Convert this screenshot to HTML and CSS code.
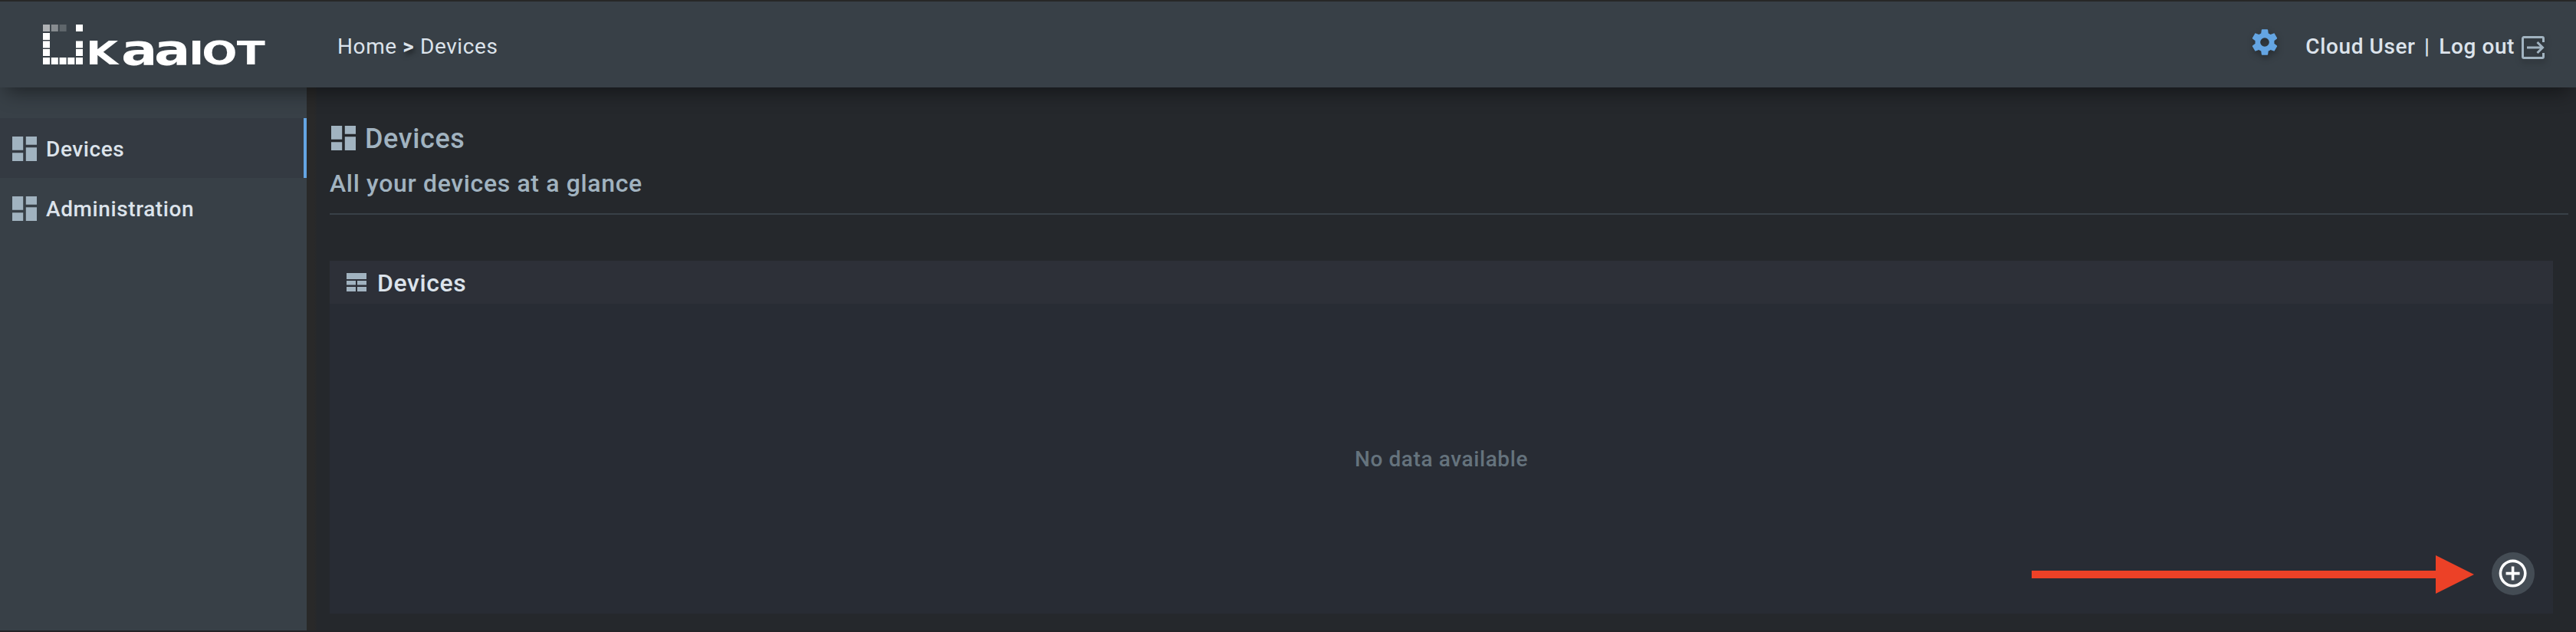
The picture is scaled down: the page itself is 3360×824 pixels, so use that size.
FILE: index.html
```html
<!DOCTYPE html>
<html lang="en">
<head>
<meta charset="utf-8">
<title>Devices</title>
<link rel="stylesheet" href="styles.css">
</head>
<body>
<svg class="defs" width="0" height="0" aria-hidden="true">
  <symbol id="dashboard" viewBox="3 3 18 18"><path d="M3 13h8V3H3zm0 8h8v-6H3zm10 0h8V11h-8zm0-18v6h8V3z"/></symbol>
</svg>
<header class="topbar">
  <a class="brand">
    <svg class="logo" width="400" height="112" viewBox="0 2 400 112" fill="#fff">
      <rect x="56" y="32" width="9" height="9" opacity=".6"/>
      <rect x="66.8" y="32" width="9" height="9" opacity=".4"/>
      <rect x="77.6" y="32" width="9" height="9" opacity=".2"/>
      <rect x="99" y="32" width="9" height="9"/>
      <rect x="56" y="43" width="9" height="9"/>
      <rect x="56" y="53.5" width="9" height="9"/>
      <rect x="99" y="53.5" width="9" height="9"/>
      <rect x="56" y="64" width="9" height="9"/>
      <rect x="99" y="64" width="9" height="9"/>
      <rect x="56" y="75" width="9" height="9"/>
      <rect x="66.8" y="75" width="9" height="9"/>
      <rect x="77.6" y="75" width="9" height="9"/>
      <rect x="88.3" y="75" width="9" height="9"/>
      <rect x="99" y="75" width="9" height="9"/>
      <text class="wordmark" y="84" transform="scale(1.28 1)"><tspan x="87.5">K</tspan><tspan class="low" x="123.4 157">aa</tspan><tspan x="192.2 205.7 241.2">IOT</tspan></text>
    </svg>
  </a>
  <nav class="crumbs"><span>Home</span> <b>&gt;</b> <span>Devices</span></nav>
  <div class="account">
    <svg class="gear" width="40" height="40" viewBox="0 0 24 24"><path d="M19.43 12.98c.04-.32.07-.64.07-.98s-.03-.66-.07-.98l2.11-1.65c.19-.15.24-.42.12-.64l-2-3.46c-.12-.22-.39-.3-.61-.22l-2.49 1c-.52-.4-1.08-.73-1.69-.98l-.38-2.65C14.46 2.18 14.25 2 14 2h-4c-.25 0-.46.18-.49.42l-.38 2.65c-.61.25-1.17.59-1.69.98l-2.49-1c-.23-.09-.49 0-.61.22l-2 3.46c-.13.22-.07.49.12.64l2.11 1.65c-.04.32-.07.65-.07.98s.03.66.07.98l-2.11 1.65c-.19.15-.24.42-.12.64l2 3.46c.12.22.39.3.61.22l2.49-1c.52.4 1.08.73 1.69.98l.38 2.65c.03.24.24.42.49.42h4c.25 0 .46-.18.49-.42l.38-2.65c.61-.25 1.17-.59 1.69-.98l2.49 1c.23.09.49 0 .61-.22l2-3.46c.12-.22.07-.49-.12-.64zM12 15.5a3.5 3.5 0 1 1 0-7 3.5 3.5 0 0 1 0 7z"/></svg>
    <span class="user">Cloud User</span>
    <span class="bar">|</span>
    <span class="logout">Log out</span>
    <svg class="exit" width="30" height="30" viewBox="0 0 30 30" fill="none" stroke-width="3"><path d="M28.500 8V3a1.500 1.500 0 0 0-1.500-1.500H3A1.500 1.500 0 0 0 1.500 3v24A1.500 1.500 0 0 0 3 28.500h24a1.500 1.500 0 0 0 1.500-1.500v-5M7 15h20M20.500 8l7 7-7 7"/></svg>
  </div>
</header>
<div class="body">
  <aside class="sidebar">
    <a class="item active"><svg class="icon" width="32" height="32"><use href="#dashboard"/></svg><span>Devices</span></a>
    <a class="item"><svg class="icon" width="32" height="32"><use href="#dashboard"/></svg><span>Administration</span></a>
  </aside>
  <main class="content">
    <div class="heading">
      <h1><svg class="icon" width="32" height="32"><use href="#dashboard"/></svg><span>Devices</span></h1>
      <p>All your devices at a glance</p>
    </div>
    <section class="panel">
      <h2><svg class="icon" width="26" height="24" viewBox="0 0 26 24"><path d="M0 0h26v8H0zM0 10h12v5.500H0zM14 10h12v5.500H14zM0 18h12v6H0zM14 18h12v6H14z"/></svg><span>Devices</span></h2>
      <div class="empty">No data available</div>
      <svg class="pointer" width="577" height="50" viewBox="0 0 577 50"><path d="M0 20h527V0l50 25-50 25V30H0z"/></svg>
      <button class="add" aria-label="Add device"><svg width="43.200" height="43.200" viewBox="0 0 24 24"><path d="M13 7h-2v4H7v2h4v4h2v-4h4v-2h-4V7zm-1-5a10 10 0 1 0 0 20 10 10 0 0 0 0-20zm0 18a8 8 0 1 1 0-16 8 8 0 0 1 0 16z"/></svg></button>
    </section>
  </main>
</div>
</body>
</html>
```
FILE: styles.css
```css
* { box-sizing: border-box; }
body {
  margin: 0;
  height: 824px;
  display: flex;
  flex-direction: column;
  overflow: hidden;
  border-top: 2px solid #272727;
  border-bottom: 2px solid #242327;
  background: #25282c;
  color: #dce3eb;
  font: 500 28px/36px Roboto, sans-serif;
  letter-spacing: 0.6px;
}
.defs { position: absolute; }
svg { display: block; flex: none; }
.icon { fill: #a1b3c0; }

.topbar {
  position: relative;
  z-index: 1;
  flex: none;
  display: flex;
  align-items: center;
  height: 112px;
  padding-right: 41px;
  background: #384047;
  box-shadow: 0 14px 24px -8px rgba(0, 0, 0, .45);
}
.brand { width: 400px; flex: none; }
.wordmark { font: bold 42.5px "DejaVu Sans", sans-serif; letter-spacing: 0; }
.wordmark .low { font-size: 55px; }
.crumbs { margin-left: 40px; padding-top: 5px; font-weight: 400; white-space: nowrap; }
.crumbs b { text-shadow: 2px 4px 6px rgba(0, 0, 0, .5); }
.account { margin-left: auto; display: flex; align-items: center; padding-top: 5px; white-space: nowrap; }
.gear { margin: -12px 33px 0 0; fill: #64a5e3; filter: drop-shadow(1px 4px 4px rgba(0, 0, 0, .3)); }
.bar { margin: 0 11.5px; }
.exit { margin: 3px 0 0 9px; stroke: #a1b3c0; filter: drop-shadow(1px 4px 4px rgba(0, 0, 0, .3)); }

.body { flex: 1; display: flex; min-height: 0; }
.sidebar { width: 400px; flex: none; padding-top: 40px; background: #384047; }
.item { display: flex; align-items: center; gap: 12px; height: 78px; padding: 2px 0 0 16px; }
.item span { padding-top: 1px; }
.item.active { background: #343a42; box-shadow: inset -4px 0 #64a5e3; }

.content {
  flex: 1;
  min-width: 0;
  padding: 40px 0 0 30px;
  background: linear-gradient(90deg, #292929 10px, #25282c 14px);
}
.heading { height: 126px; margin-right: 10px; border-bottom: 2px solid #384047; color: #a1b3c0; }
.heading h1 { margin: 0; display: flex; align-items: center; gap: 12px; height: 52px; padding-left: 2px; font-size: 36px; font-weight: 500; }
.heading h1 span, .panel h2 span { padding-top: 2px; }
.heading p { margin: 0; padding-top: 13px; font-size: 32px; line-height: 40px; letter-spacing: 0.65px; }
.panel {
  position: relative;
  display: flex;
  flex-direction: column;
  height: 460px;
  margin: 60px 30px 0 0;
  background: #282c34;
}
.panel h2 { margin: 0; display: flex; align-items: center; gap: 14px; height: 56px; padding-left: 22px; background: #2d3038; font-size: 32px; font-weight: 500; }
.empty { flex: 1; display: flex; align-items: center; justify-content: center; padding-top: 2px; color: #65737d; letter-spacing: 0.6px; }
.pointer { position: absolute; right: 103px; bottom: 26px; fill: #ec4127; }
.add {
  position: absolute;
  right: 24px;
  bottom: 24px;
  display: flex;
  align-items: center;
  justify-content: center;
  width: 56px;
  height: 56px;
  padding: 0;
  border: 0;
  border-radius: 50%;
  background: #444c54;
  fill: #fff;
}
```
